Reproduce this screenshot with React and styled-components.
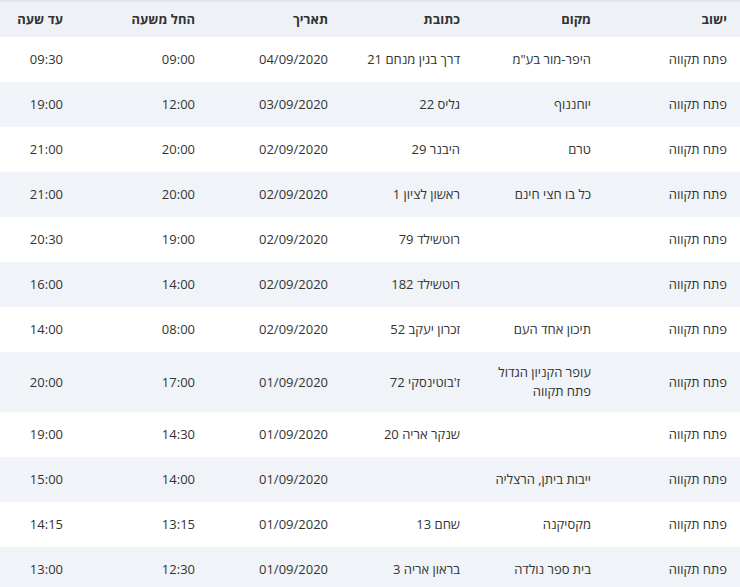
import React from "react";
import styled, { createGlobalStyle } from "styled-components";

const GlobalStyle = createGlobalStyle`
  body { margin: 0; background: #fff; font-family: "Open Sans", "Noto Sans", sans-serif; }
`;

const Table = styled.table`
  width: 740px;
  direction: rtl;
  border-collapse: collapse;
  table-layout: fixed;
  font-size: 13px;
  color: #333;
`;

const Head = styled.th`
  height: 37px;
  background: #eef2f6;
  font-weight: 700;
  text-align: right;
  padding: 0 13px 0 0;
  box-shadow: inset 0 3px 3px -2px rgba(0, 0, 0, 0.08);
`;

const Row = styled.tr`
  background: ${(p) => (p.$alt ? "#f0f3f7" : "#fff")};
`;

const Cell = styled.td`
  height: 45px;
  box-sizing: border-box;
  text-align: right;
  padding: 11px 13px 11px 0;
  line-height: 19px;
  vertical-align: middle;
`;

const widths = [136, 131, 132, 133, 132, 76];
const headers = ["ישוב", "מקום", "כתובת", "תאריך", "החל משעה", "עד שעה"];

const rows = [
  ["פתח תקווה", "היפר-מור בע\"מ", "דרך בגין מנחם 21", "04/09/2020", "09:00", "09:30"],
  ["פתח תקווה", "יוחננוף", "גליס 22", "03/09/2020", "12:00", "19:00"],
  ["פתח תקווה", "טרם", "היבנר 29", "02/09/2020", "20:00", "21:00"],
  ["פתח תקווה", "כל בו חצי חינם", "ראשון לציון 1", "02/09/2020", "20:00", "21:00"],
  ["פתח תקווה", "", "רוטשילד 79", "02/09/2020", "19:00", "20:30"],
  ["פתח תקווה", "", "רוטשילד 182", "02/09/2020", "14:00", "16:00"],
  ["פתח תקווה", "תיכון אחד העם", "זכרון יעקב 52", "02/09/2020", "08:00", "14:00"],
  ["פתח תקווה", "עופר הקניון הגדול פתח תקווה", "ז'בוטינסקי 72", "01/09/2020", "17:00", "20:00"],
  ["פתח תקווה", "", "שנקר אריה 20", "01/09/2020", "14:30", "19:00"],
  ["פתח תקווה", "ייבות ביתן, הרצליה", "", "01/09/2020", "14:00", "15:00"],
  ["פתח תקווה", "מקסיקנה", "שחם 13", "01/09/2020", "13:15", "14:15"],
  ["פתח תקווה", "בית ספר נולדה", "בראון אריה 3", "01/09/2020", "12:30", "13:00"],
];

export default function App() {
  return (
    <>
      <GlobalStyle />
      <Table>
        <colgroup>
          {widths.map((w, i) => (
            <col key={i} style={{ width: w }} />
          ))}
        </colgroup>
        <thead>
          <tr>
            {headers.map((h) => (
              <Head key={h}>{h}</Head>
            ))}
          </tr>
        </thead>
        <tbody>
          {rows.map((r, i) => (
            <Row key={i} $alt={i % 2 === 1}>
              {r.map((c, j) => (
                <Cell key={j}>{c}</Cell>
              ))}
            </Row>
          ))}
        </tbody>
      </Table>
    </>
  );
}
